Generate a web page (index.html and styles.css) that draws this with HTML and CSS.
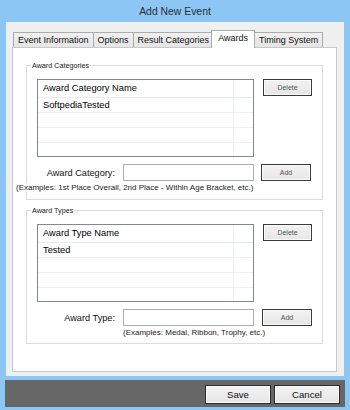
FILE: index.html
```html
<!DOCTYPE html>
<html>
<head>
<meta charset="utf-8">
<title>Add New Event</title>
<link rel="stylesheet" href="styles.css">
</head>
<body>
<div class="window">
  <div class="titlebar">Add New Event</div>
  <div class="client">
    <div class="tabs">
      <div class="tab">Event Information</div>
      <div class="tab">Options</div>
      <div class="tab">Result Categories</div>
      <div class="tab active">Awards</div>
      <div class="tab">Timing System</div>
    </div>
    <div class="panel">
      <div class="group">
        <div class="group-title">Award Categories</div>
        <div class="list-row">
          <div class="listview">
            <div class="lv-row lv-head"><span class="lv-cell">Award Category Name</span><span class="lv-cell"></span></div>
            <div class="lv-row"><span class="lv-cell">SoftpediaTested</span><span class="lv-cell"></span></div>
            <div class="lv-row"><span class="lv-cell"></span><span class="lv-cell"></span></div>
            <div class="lv-row"><span class="lv-cell"></span><span class="lv-cell"></span></div>
            <div class="lv-row"><span class="lv-cell"></span><span class="lv-cell"></span></div>
          </div>
          <div class="btn small">Delete</div>
        </div>
        <div class="input-row">
          <label class="field-label">Award Category:</label>
          <div class="textbox"></div>
          <div class="btn small add">Add</div>
        </div>
        <div class="hint hint-wide">(Examples: 1st Place Overall, 2nd Place - Within Age Bracket, etc.)</div>
      </div>
      <div class="group group2">
        <div class="group-title">Award Types</div>
        <div class="list-row">
          <div class="listview">
            <div class="lv-row lv-head"><span class="lv-cell">Award Type Name</span><span class="lv-cell"></span></div>
            <div class="lv-row"><span class="lv-cell">Tested</span><span class="lv-cell"></span></div>
            <div class="lv-row"><span class="lv-cell"></span><span class="lv-cell"></span></div>
            <div class="lv-row"><span class="lv-cell"></span><span class="lv-cell"></span></div>
            <div class="lv-row"><span class="lv-cell"></span><span class="lv-cell"></span></div>
          </div>
          <div class="btn small">Delete</div>
        </div>
        <div class="input-row">
          <label class="field-label">Award Type:</label>
          <div class="textbox"></div>
          <div class="btn small add add2">Add</div>
        </div>
        <div class="hint hint-short">(Examples: Medal, Ribbon, Trophy, etc.)</div>
      </div>
    </div>
  </div>
  <div class="footer">
    <div class="btn big">Save</div>
    <div class="btn big">Cancel</div>
  </div>
</div>
</body>
</html>
```

FILE: styles.css
```css
html, body {
  margin: 0;
  padding: 0;
}
body {
  width: 350px;
  height: 410px;
  overflow: hidden;
  font-family: "Liberation Sans", Arial, sans-serif;
  color: #000;
}
.window {
  width: 350px;
  height: 410px;
  box-sizing: border-box;
  background: #8cc6f4;
  display: flex;
  flex-direction: column;
}
.titlebar {
  height: 22px;
  display: flex;
  align-items: center;
  justify-content: center;
  font-size: 10.4px;
  color: #2e2e2e;
  padding-top: 1px;
  box-sizing: border-box;
}
.client {
  margin: 0 6px;
  height: 354px;
  box-sizing: border-box;
  background: #f0f0f0;
  padding: 8px 7px 0 6px;
  display: flex;
  flex-direction: column;
}
.tabs {
  display: flex;
  align-items: flex-end;
  height: 17px;
  padding-left: 1px;
}
.tab {
  height: 15px;
  box-sizing: border-box;
  border: 1px solid #acacac;
  border-bottom: none;
  background: linear-gradient(#f0f0f0, #e5e5e5);
  font-size: 9px;
  line-height: 14px;
  padding: 0 4px;
  margin-right: -1px;
  color: #111;
  white-space: nowrap;
}
.tab.active {
  height: 18px;
  margin: 0 -1px -1px -2px;
  padding: 0 6px;
  line-height: 15px;
  background: #fff;
  position: relative;
  z-index: 1;
}
.panel {
  height: 325px;
  box-sizing: border-box;
  background: #fff;
  border: 1px solid #c9c9c9;
  padding-top: 17px;
}
.group {
  margin: 0 13px;
  height: 135px;
  box-sizing: border-box;
  border: 1px solid #dcdcdc;
}
.group2 {
  margin-top: 10px;
  height: 134px;
}
.group-title {
  width: fit-content;
  margin: -5px 0 0 4px;
  padding: 0 1px;
  background: #fff;
  font-size: 7.2px;
  line-height: 9px;
  color: #222;
  white-space: nowrap;
}
.list-row {
  display: flex;
  align-items: flex-start;
  margin-top: 9px;
  padding-left: 10px;
}
.listview {
  width: 217px;
  height: 78px;
  box-sizing: border-box;
  border: 1px solid #828790;
  background: #fff;
  overflow: hidden;
}
.lv-row {
  display: grid;
  grid-template-columns: 196px 1fr;
  height: 14px;
  border-bottom: 1px solid #f0f0f0;
}
.lv-row.lv-head {
  height: 17px;
  border-bottom-color: #e5ebf3;
}
.lv-cell {
  font-size: 9.3px;
  line-height: 14px;
  padding-left: 5px;
  white-space: nowrap;
  overflow: hidden;
}
.lv-head .lv-cell {
  line-height: 17px;
}
.lv-cell:first-child {
  border-right: 1px solid #eef2f7;
}
.btn {
  box-sizing: border-box;
  border: 1px solid #3c3c3c;
  box-shadow: inset 0 0 0 1px #fafafa;
  background: linear-gradient(#f2f2f2, #e6e6e6);
  display: flex;
  align-items: center;
  justify-content: center;
  white-space: nowrap;
}
.btn.small {
  width: 49px;
  height: 17px;
  margin-left: 9px;
  font-size: 7px;
  color: #555;
}
.btn.add {
  width: 50px;
  margin-left: 7px;
}
.btn.add2 {
  margin-left: 8px;
}
.input-row {
  display: flex;
  align-items: center;
  margin-top: 7px;
}
.field-label {
  width: 96px;
  box-sizing: border-box;
  padding-right: 8px;
  text-align: right;
  font-size: 9.2px;
  color: #111;
  white-space: nowrap;
}
.textbox {
  width: 131px;
  height: 17px;
  box-sizing: border-box;
  border: 1px solid #abadb3;
  background: #fff;
}
.hint {
  font-size: 8px;
  line-height: 9px;
  color: #222;
  white-space: nowrap;
  margin-top: 2px;
  background: #fff;
  width: fit-content;
}
.hint-wide {
  margin-left: -11px;
}
.hint-short {
  margin-left: 96px;
}
.footer {
  margin: 4px 5px 0;
  height: 27px;
  background: #676767;
  display: flex;
  justify-content: flex-end;
  align-items: flex-start;
  padding: 5px 5px 0 0;
  box-sizing: border-box;
  gap: 3px;
}
.btn.big {
  width: 66px;
  height: 19px;
  font-size: 9.6px;
  color: #111;
  border-color: #2a2a2a;
}
```
